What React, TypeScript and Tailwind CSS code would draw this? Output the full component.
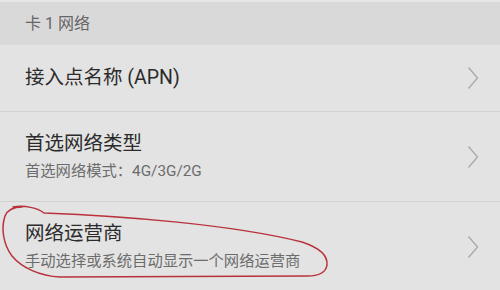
import React from "react";

const font = { fontFamily: '"Roboto", "Noto Sans CJK SC", sans-serif' };

function Chevron() {
  return (
    <svg width="12" height="24" viewBox="0 0 12 24" className="shrink-0">
      <path d="M1.5 1.5 L10.5 12 L1.5 22.5" fill="none" stroke="#ababab" strokeWidth="1.4" />
    </svg>
  );
}

export default function App() {
  return (
    <div className="relative w-[500px] h-[290px] overflow-hidden bg-[#e3e3e3]" style={font}>
      <div className="h-[2px] bg-[#e6e6e6]" />
      <div className="h-[43px] bg-[#d9d9d9] flex items-center pl-[25px] text-[16px] text-[#666666]">
        卡 1 网络
      </div>
      <div className="h-[66px] flex items-center justify-between pl-[25px] pr-[21px]">
        <div className="text-[19.5px] text-[#2b2b2b]">接入点名称 (APN)</div>
        <Chevron />
      </div>
      <div className="h-px bg-[#d2d2d2]" />
      <div className="h-[89px] flex items-center justify-between pl-[25px] pr-[21px]">
        <div className="flex flex-col">
          <div className="text-[19.5px] leading-[26px] text-[#2b2b2b]">首选网络类型</div>
          <div className="text-[15.3px] leading-[22px] mt-[3px] text-[#6c6c6c]">首选网络模式：4G/3G/2G</div>
        </div>
        <Chevron />
      </div>
      <div className="h-px bg-[#d2d2d2]" />
      <div className="h-[89px] flex items-center justify-between pl-[25px] pr-[21px]">
        <div className="flex flex-col">
          <div className="text-[19.5px] leading-[26px] text-[#2b2b2b]">网络运营商</div>
          <div className="text-[15.3px] leading-[22px] mt-[3px] text-[#6c6c6c]">手动选择或系统自动显示一个网络运营商</div>
        </div>
        <Chevron />
      </div>
      <svg className="absolute left-0 top-0 pointer-events-none" width="500" height="290" viewBox="0 0 500 290">
        <path
          d="M13 207 C 25 205, 38 208, 44 213 C 120 216, 230 224, 302 242 C 320 248, 328 256, 327 265 C 326 272, 320 276, 307 276 L 60 277 C 40 276, 22 268, 12 256 C 3 244, 1 228, 5 216 C 8 209, 14 207, 22 207"
          fill="none"
          stroke="#b8323c"
          strokeWidth="1.5"
          strokeLinecap="round"
        />
      </svg>
    </div>
  );
}
